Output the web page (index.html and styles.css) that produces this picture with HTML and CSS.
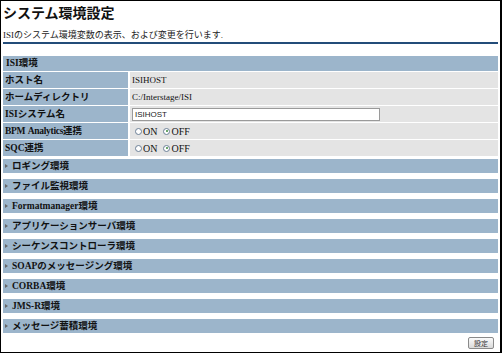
FILE: index.html
```html
<!DOCTYPE html>
<html>
<head>
    <title>システム環境設定</title>
    <link rel="stylesheet" href="styles.css">
</head>
<body>
    <div class="page">
        <h1 class="title">システム環境設定</h1>
        <p class="desc">ISIのシステム環境変数の表示、および変更を行います.</p>

        <div class="section">
            <div class="section-head">ISI環境</div>
            <div class="props">
                <div class="label">ホスト名</div>
                <div class="value">ISIHOST</div>

                <div class="label">ホームディレクトリ</div>
                <div class="value">C:/Interstage/ISI</div>

                <div class="label">ISIシステム名</div>
                <div class="value"><input type="text" class="text-input" value="ISIHOST"></div>

                <div class="label"><span class="narrow">BPM Analytics</span>連携</div>
                <div class="value">
                    <span class="radio"></span><span class="radio-text">ON</span>
                    <span class="radio checked"></span><span class="radio-text">OFF</span>
                </div>

                <div class="label">SQC連携</div>
                <div class="value">
                    <span class="radio"></span><span class="radio-text">ON</span>
                    <span class="radio checked"></span><span class="radio-text">OFF</span>
                </div>
            </div>
        </div>

        <div class="folds">
            <div class="fold"><span class="arrow"></span>ロギング環境</div>
            <div class="fold"><span class="arrow"></span>ファイル監視環境</div>
            <div class="fold"><span class="arrow"></span>Formatmanager環境</div>
            <div class="fold"><span class="arrow"></span>アプリケーションサーバ環境</div>
            <div class="fold"><span class="arrow"></span>シーケンスコントローラ環境</div>
            <div class="fold"><span class="arrow"></span>SOAPのメッセージング環境</div>
            <div class="fold"><span class="arrow"></span>CORBA環境</div>
            <div class="fold"><span class="arrow"></span>JMS-R環境</div>
            <div class="fold"><span class="arrow"></span>メッセージ蓄積環境</div>
        </div>

        <div class="actions">
            <button type="button" class="submit-btn">設定</button>
        </div>
    </div>
</body>
</html>
```

FILE: styles.css
```css
:root {
    --bar-blue: #9cb5cb;
    --value-grey: #e4e4e4;
    --line-blue: #234c79;
}

* {
    margin: 0;
    padding: 0;
    box-sizing: border-box;
}

body {
    background: white;
    font-family: "Liberation Serif", "Noto Sans CJK JP", serif;
    color: #111;
}

.page {
    width: 502px;
    height: 353px;
    border: 1px solid #000;
    border-right-width: 2px;
    padding: 0 2px;
}

.title {
    font-family: "Noto Sans CJK JP", sans-serif;
    font-size: 14px;
    font-weight: bold;
    line-height: 18px;
    padding-top: 2px;
}

.desc {
    margin-top: 9px;
    font-size: 9px;
    line-height: 11px;
    padding-bottom: 1px;
    border-bottom: 2px solid var(--line-blue);
    color: #222;
}

.section {
    margin-top: 12px;
}

.section-head {
    height: 15px;
    line-height: 15px;
    background: var(--bar-blue);
    padding-left: 3px;
    font-size: 9.5px;
    font-weight: bold;
}

.props {
    display: grid;
    grid-template-columns: 125px 1fr;
    grid-auto-rows: 16px;
    gap: 1px 2px;
    margin-top: 1px;
}

.label {
    line-height: 16px;
    background: var(--bar-blue);
    padding-left: 2px;
    font-size: 9.5px;
    font-weight: bold;
    white-space: nowrap;
}

.narrow {
    letter-spacing: -0.3px;
    word-spacing: 1px;
}

.value {
    display: flex;
    align-items: center;
    background: var(--value-grey);
    padding-left: 2px;
    font-size: 9px;
}

.text-input {
    width: 248px;
    height: 13px;
    border: 1px solid #9a9a9a;
    padding: 0 2px;
    font-family: "Liberation Sans", sans-serif;
    font-size: 8px;
    color: #222;
    background: white;
}

.radio {
    display: inline-block;
    width: 7px;
    height: 7px;
    border: 1px solid #6b7f96;
    border-radius: 50%;
    background: white;
    margin-left: 3px;
    position: relative;
}

.radio.checked::after {
    content: "";
    position: absolute;
    left: 1.5px;
    top: 1.5px;
    width: 2px;
    height: 2px;
    border-radius: 50%;
    background: #3a8a3a;
}

.radio-text {
    margin-left: 1px;
    margin-right: 3px;
    font-size: 10px;
}

.folds {
    display: flex;
    flex-direction: column;
    gap: 6px;
    margin-top: 3px;
}

.fold {
    height: 14px;
    line-height: 14px;
    background: var(--bar-blue);
    font-size: 9.5px;
    font-weight: bold;
    display: flex;
    align-items: center;
}

.arrow {
    width: 0;
    height: 0;
    border-left: 3px solid #666;
    border-top: 2px solid transparent;
    border-bottom: 2px solid transparent;
    margin: 0 4px 0 2px;
}

.actions {
    display: flex;
    justify-content: flex-end;
    margin-top: 4px;
    padding-right: 4px;
}

.submit-btn {
    width: 26px;
    height: 12px;
    border: 1px solid #8a8a8a;
    border-radius: 2px;
    background: linear-gradient(#fbfbfb, #dadada);
    font-family: "Noto Sans CJK JP", sans-serif;
    font-size: 7px;
    color: #333;
    line-height: 10px;
}
```
